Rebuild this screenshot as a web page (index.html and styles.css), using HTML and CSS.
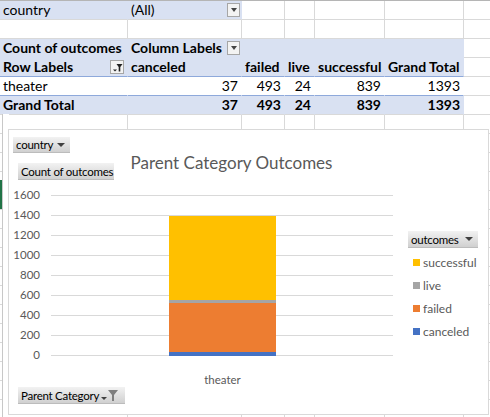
FILE: index.html
```html
<!DOCTYPE html>
<html>
<head>
<meta charset="utf-8">
<link rel="stylesheet" href="styles.css">
</head>
<body>
<div class="sheet">
  <div class="grid">
    <div class="r">
      <div class="c pv">country</div>
      <div class="c pv split"><span>(All)</span><span class="dd"><span class="tri"></span></span></div>
      <div class="c"></div><div class="c"></div><div class="c"></div><div class="c"></div><div class="c"></div>
    </div>
    <div class="r">
      <div class="c"></div><div class="c"></div><div class="c"></div><div class="c"></div><div class="c"></div><div class="c"></div><div class="c"></div>
    </div>
    <div class="r">
      <div class="c pv nb b">Count of outcomes</div>
      <div class="c pv nb b split"><span>Column Labels</span><span class="dd"><span class="tri"></span></span></div>
      <div class="c pv nb"></div><div class="c pv nb"></div><div class="c pv nb"></div><div class="c pv nb"></div><div class="c"></div>
    </div>
    <div class="r">
      <div class="c pv bl b split"><span>Row Labels</span><span class="dd flt"><svg width="11" height="11" viewBox="0 0 11 11"><path d="M1 7.5h4L3 9.5z" fill="#222"/><path d="M4.5 2h6L8.3 5v4.5h-1.6V5z" fill="#222"/></svg></span></div>
      <div class="c pv bl b">canceled</div>
      <div class="c pv bl b">failed</div>
      <div class="c pv bl b">live</div>
      <div class="c pv bl b">successful</div>
      <div class="c pv bl b">Grand Total</div>
      <div class="c"></div>
    </div>
    <div class="r">
      <div class="c wh bl">theater</div>
      <div class="c wh bl num">37</div>
      <div class="c wh bl num">493</div>
      <div class="c wh bl num">24</div>
      <div class="c wh bl num">839</div>
      <div class="c wh bl num">1393</div>
      <div class="c"></div>
    </div>
    <div class="r">
      <div class="c pv b">Grand Total</div>
      <div class="c pv b num">37</div>
      <div class="c pv b num">493</div>
      <div class="c pv b num">24</div>
      <div class="c pv b num">839</div>
      <div class="c pv b num">1393</div>
      <div class="c"></div>
    </div>
    <div class="r"><div class="c"></div><div class="c"></div><div class="c"></div><div class="c"></div><div class="c"></div><div class="c"></div><div class="c"></div></div>
    <div class="r"><div class="c"></div><div class="c"></div><div class="c"></div><div class="c"></div><div class="c"></div><div class="c"></div><div class="c"></div></div>
    <div class="r"><div class="c"></div><div class="c"></div><div class="c"></div><div class="c"></div><div class="c"></div><div class="c"></div><div class="c"></div></div>
    <div class="r"><div class="c"></div><div class="c"></div><div class="c"></div><div class="c"></div><div class="c"></div><div class="c"></div><div class="c"></div></div>
    <div class="r"><div class="c"></div><div class="c"></div><div class="c"></div><div class="c"></div><div class="c"></div><div class="c"></div><div class="c"></div></div>
    <div class="r"><div class="c"></div><div class="c"></div><div class="c"></div><div class="c"></div><div class="c"></div><div class="c"></div><div class="c"></div></div>
    <div class="r"><div class="c"></div><div class="c"></div><div class="c"></div><div class="c"></div><div class="c"></div><div class="c"></div><div class="c"></div></div>
    <div class="r"><div class="c"></div><div class="c"></div><div class="c"></div><div class="c"></div><div class="c"></div><div class="c"></div><div class="c"></div></div>
    <div class="r"><div class="c"></div><div class="c"></div><div class="c"></div><div class="c"></div><div class="c"></div><div class="c"></div><div class="c"></div></div>
    <div class="r"><div class="c"></div><div class="c"></div><div class="c"></div><div class="c"></div><div class="c"></div><div class="c"></div><div class="c"></div></div>
    <div class="r"><div class="c"></div><div class="c"></div><div class="c"></div><div class="c"></div><div class="c"></div><div class="c"></div><div class="c"></div></div>
    <div class="r"><div class="c"></div><div class="c"></div><div class="c"></div><div class="c"></div><div class="c"></div><div class="c"></div><div class="c"></div></div>
    <div class="r"><div class="c"></div><div class="c"></div><div class="c"></div><div class="c"></div><div class="c"></div><div class="c"></div><div class="c"></div></div>
    <div class="r"><div class="c"></div><div class="c"></div><div class="c"></div><div class="c"></div><div class="c"></div><div class="c"></div><div class="c"></div></div>
    <div class="r"><div class="c"></div><div class="c"></div><div class="c"></div><div class="c"></div><div class="c"></div><div class="c"></div><div class="c"></div></div>
    <div class="r"><div class="c"></div><div class="c"></div><div class="c"></div><div class="c"></div><div class="c"></div><div class="c"></div><div class="c"></div></div>
  </div>

  <div class="edge"></div>
  <div class="sel-mark"></div>

  <div class="chart">
    <div class="fbtn btn-country">country<span class="arr"></span></div>
    <div class="fbtn btn-value">Count of outcomes</div>
    <div class="title">Parent Category Outcomes</div>

    <div class="plot">
      <div class="plot-row">
        <div class="ylabels">
          <span>1600</span><span>1400</span><span>1200</span><span>1000</span><span>800</span><span>600</span><span>400</span><span>200</span><span>0</span>
        </div>
        <div class="gridarea">
          <div class="bar">
            <div class="seg s-canceled" style="height:3.7px"></div>
            <div class="seg s-failed" style="height:49.3px"></div>
            <div class="seg s-live" style="height:2.4px"></div>
            <div class="seg s-successful" style="height:83.9px"></div>
          </div>
        </div>
      </div>
      <div class="xlabel">theater</div>
    </div>

    <div class="legend">
      <div class="fbtn btn-legend">outcomes<span class="arr"></span></div>
      <div class="litem"><span class="sw s-successful"></span>successful</div>
      <div class="litem"><span class="sw s-live"></span>live</div>
      <div class="litem"><span class="sw s-failed"></span>failed</div>
      <div class="litem"><span class="sw s-canceled"></span>canceled</div>
    </div>

    <div class="fbtn btn-axis">Parent Category<span class="arr small"></span><svg class="funnel" width="10" height="11" viewBox="0 0 10 11"><path d="M0 0h10L6 5v6H4V5z" fill="#7f7f7f"/></svg></div>
  </div>
</div>
</body>
</html>
```

FILE: styles.css
```css
html, body {
  margin: 0;
  padding: 0;
  background: #ffffff;
}

.sheet {
  position: relative;
  width: 490px;
  height: 417px;
  overflow: hidden;
  font-family: Lato, "Liberation Sans", sans-serif;
  font-size: 14px;
  color: #000;
}

.grid {
  border-top: 1px solid #b5b5b5;
}

.r {
  display: grid;
  grid-template-columns: 128px 114px 43px 30px 70px 79px 80px;
  height: 19px;
}

.c {
  box-sizing: border-box;
  height: 19px;
  border-right: 1px solid #d9d9d9;
  border-bottom: 1px solid #d9d9d9;
  padding: 0 3px;
  line-height: 18px;
  white-space: nowrap;
  overflow: hidden;
}

.pv {
  background: #d9e1f2;
  border-right-color: #d9e1f2;
}

.nb {
  border-bottom-color: #d9e1f2;
}

.wh {
  background: #fff;
  border-right-color: #fff;
}

.bl {
  border-bottom-color: #8ea9db;
}

.b {
  font-weight: bold;
}

.num {
  text-align: right;
}

.split {
  display: flex;
  align-items: center;
  justify-content: space-between;
  padding-right: 1px;
}

.dd {
  box-sizing: border-box;
  width: 13px;
  height: 14px;
  border: 1px solid #a6a6a6;
  background: #f3f3f3;
  display: flex;
  align-items: center;
  justify-content: center;
}

.tri {
  width: 0;
  height: 0;
  border-left: 3.5px solid transparent;
  border-right: 3.5px solid transparent;
  border-top: 4px solid #444;
}

.flt {
  width: 14px;
  margin-right: 2px;
}

/* left edge strip beside the chart */
.edge {
  position: absolute;
  left: 2px;
  top: 114px;
  width: 6px;
  height: 303px;
  background: #fff;
  border-left: 1px solid #c8c8c8;
}

.sel-mark {
  position: absolute;
  left: 0;
  top: 180px;
  width: 2px;
  height: 29px;
  background: #217346;
}

/* chart */
.chart {
  position: absolute;
  left: 8px;
  top: 129px;
  width: 481px;
  height: 286px;
  box-sizing: border-box;
  border: 1px solid #d9d9d9;
  background: #fff;
  font-family: Lato, "Liberation Sans", sans-serif;
  color: #595959;
}

.fbtn {
  position: absolute;
  box-sizing: border-box;
  height: 17px;
  display: flex;
  align-items: center;
  padding: 0 3px;
  font-size: 11.5px;
  letter-spacing: -0.25px;
  white-space: nowrap;
  color: #000;
  background: linear-gradient(#f2f2f2, #d0d0d0);
  border-bottom: 1px solid #bcbcbc;
}

.arr {
  width: 0;
  height: 0;
  border-left: 4px solid transparent;
  border-right: 4px solid transparent;
  border-top: 4px solid #404040;
  margin-left: auto;
  margin-right: 2px;
}

.arr.small {
  margin-left: 2px;
  margin-right: 0;
  margin-top: 6px;
  border-left-width: 3px;
  border-right-width: 3px;
  border-top-width: 3px;
}

.funnel {
  margin-left: 1px;
}

.btn-country {
  left: 4px;
  top: 7px;
  width: 57px;
  height: 16px;
}

.btn-value {
  left: 9px;
  top: 33px;
  width: 96px;
}

.btn-axis {
  left: 9px;
  top: 257px;
  width: 107px;
}

.title {
  position: absolute;
  left: 0;
  width: 445px;
  top: 21px;
  text-align: center;
  font-size: 17px;
  line-height: 24px;
  color: #595959;
}

.plot {
  position: absolute;
  left: 0;
  top: 55px;
  width: 390px;
}

.plot-row {
  display: flex;
  align-items: flex-start;
  padding-top: 10px;
}

.ylabels {
  width: 31px;
  margin-top: -10px;
  display: flex;
  flex-direction: column;
  align-items: flex-end;
  font-size: 11.5px;
}

.ylabels span {
  height: 20px;
  line-height: 20px;
}

.gridarea {
  margin-left: 11px;
  width: 342px;
  height: 161px;
  background: repeating-linear-gradient(to bottom, #d9d9d9 0 1px, transparent 1px 20px);
  display: flex;
  align-items: flex-end;
}

.bar {
  margin-left: 118px;
  width: 107px;
  margin-bottom: 0.5px;
  display: flex;
  flex-direction: column-reverse;
}

.s-successful { background: #ffc000; }
.s-live { background: #a5a5a5; }
.s-failed { background: #ed7d31; }
.s-canceled { background: #4472c4; }

.xlabel {
  margin-left: 160px;
  width: 107px;
  margin-top: 8px;
  text-align: center;
  font-size: 11.5px;
}

.legend {
  position: absolute;
  left: 399px;
  top: 101px;
  width: 72px;
  display: flex;
  flex-direction: column;
}

.btn-legend {
  position: static;
  width: 70px;
  margin-bottom: 3px;
}

.litem {
  display: flex;
  align-items: center;
  height: 23px;
  font-size: 12px;
  color: #595959;
}

.sw {
  width: 7px;
  height: 7px;
  margin-left: 5px;
  margin-right: 3px;
}
```
